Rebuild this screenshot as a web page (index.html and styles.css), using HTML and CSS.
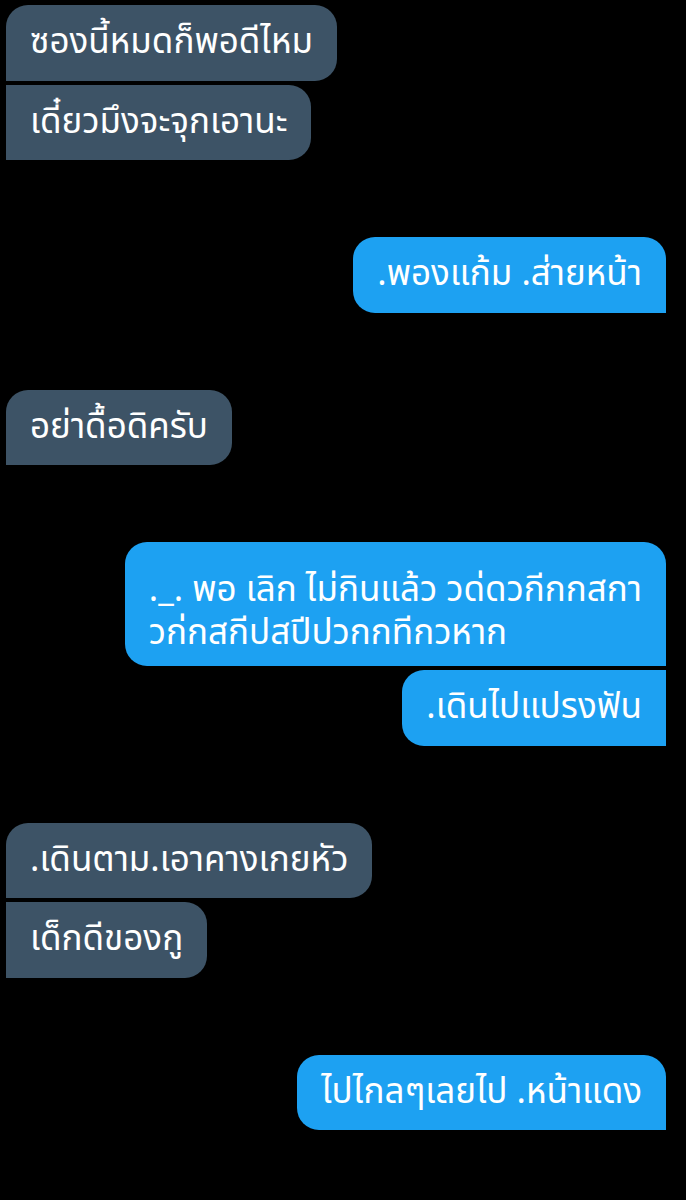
FILE: index.html
```html
<!DOCTYPE html>
<html lang="th">
<head>
    <meta charset="UTF-8">
    <meta name="viewport" content="width=device-width, initial-scale=1.0">
    <title>Chat</title>
    <link rel="stylesheet" href="styles.css">
</head>
<body>
    <div class="chat">
        <div class="group in">
            <div class="bubble">ซองนี้หมดก็พอดีไหม</div>
            <div class="bubble">เดี๋ยวมึงจะจุกเอานะ</div>
        </div>

        <div class="group out">
            <div class="bubble">.พองแก้ม .ส่ายหน้า</div>
        </div>

        <div class="group in">
            <div class="bubble">อย่าดื้อดิครับ</div>
        </div>

        <div class="group out">
            <div class="bubble multi">._. พอ เลิก ไม่กินแล้ว วด่ดวกีกกสกา<br>วก่กสกีปสปีปวกกทีกวหาก</div>
            <div class="bubble">.เดินไปแปรงฟัน</div>
        </div>

        <div class="group in">
            <div class="bubble">.เดินตาม.เอาคางเกยหัว</div>
            <div class="bubble">เด็กดีของกู</div>
        </div>

        <div class="group out">
            <div class="bubble">ไปไกลๆเลยไป .หน้าแดง</div>
        </div>
    </div>
</body>
</html>
```

FILE: styles.css
```css
:root {
    --bubble-in: #3d5366;
    --bubble-out: #1da1f2;
    --radius: 22px;
}

body {
    margin: 0;
    padding: 0;
    background-color: #000;
    color: #fff;
    font-family: "Noto Sans Thai", "Noto Sans", "DejaVu Sans", sans-serif;
    min-height: 100vh;
}

.chat {
    display: flex;
    flex-direction: column;
    gap: 77px;
    padding: 5px 20px 0 6px;
}

.group {
    display: flex;
    flex-direction: column;
    gap: 4px;
}

.group.in {
    align-items: flex-start;
}

.group.out {
    align-items: flex-end;
}

.bubble {
    padding: 18px 24px 17.5px;
    font-size: 35px;
    line-height: 40px;
    border-radius: var(--radius);
    white-space: nowrap;
}

.bubble.multi {
    padding-top: 27px;
    padding-bottom: 11px;
    line-height: 43px;
}

.in .bubble {
    background-color: var(--bubble-in);
    border-bottom-left-radius: 0;
}

.in .bubble + .bubble {
    border-top-left-radius: 0;
}

.out .bubble {
    background-color: var(--bubble-out);
    border-bottom-right-radius: 0;
}

.out .bubble + .bubble {
    border-top-right-radius: 0;
}
```
